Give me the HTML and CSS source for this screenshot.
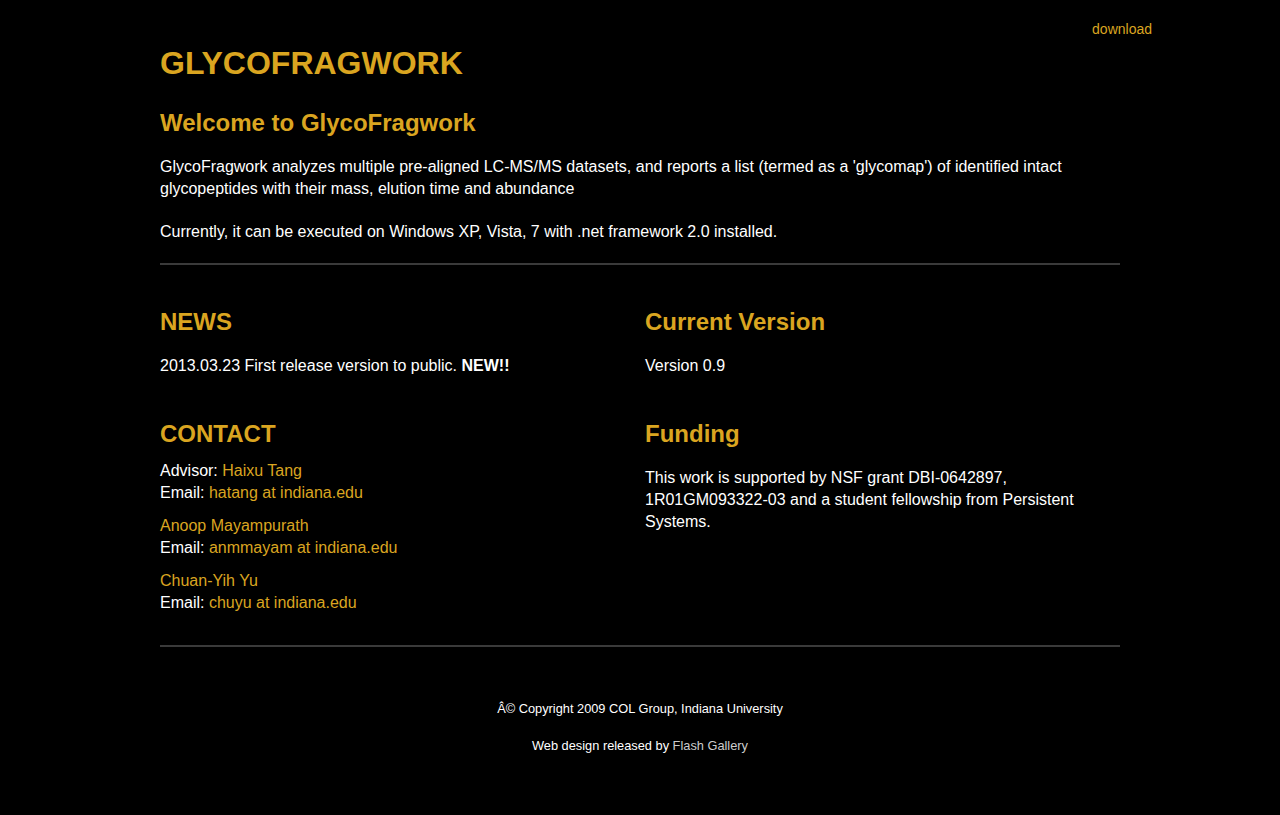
FILE: index.html
```html
<!DOCTYPE html>
<html>
<head>
<meta charset="utf-8">
<title>GlycoFragwork</title>
<link rel="stylesheet" href="styles.css">
</head>
<body>
<div class="topbar"><a class="link" href="#">download</a></div>
<div class="page">
  <h1 class="title">GLYCOFRAGWORK</h1>
  <h2 class="heading welcome">Welcome to GlycoFragwork</h2>
  <p class="text">GlycoFragwork analyzes multiple pre-aligned LC-MS/MS datasets, and reports a list (termed as a 'glycomap') of identified intact glycopeptides with their mass, elution time and abundance</p>
  <p class="text">Currently, it can be executed on Windows XP, Vista, 7 with .net framework 2.0 installed.</p>
  <div class="rule"></div>
  <div class="grid">
    <section class="col">
      <h2 class="heading">NEWS</h2>
      <p class="text">2013.03.23 First release version to public. <b>NEW!!</b></p>
    </section>
    <section class="col">
      <h2 class="heading">Current Version</h2>
      <p class="text">Version 0.9</p>
    </section>
    <section class="col">
      <h2 class="heading contact-h">CONTACT</h2>
      <p class="text contact">Advisor: <a class="link" href="#">Haixu Tang</a><br>Email: <a class="link" href="#">hatang at indiana.edu</a></p>
      <p class="text contact"><a class="link" href="#">Anoop Mayampurath</a><br>Email: <a class="link" href="#">anmmayam at indiana.edu</a></p>
      <p class="text contact"><a class="link" href="#">Chuan-Yih Yu</a><br>Email: <a class="link" href="#">chuyu at indiana.edu</a></p>
    </section>
    <section class="col">
      <h2 class="heading">Funding</h2>
      <p class="text">This work is supported by NSF grant DBI-0642897, 1R01GM093322-03 and a student fellowship from Persistent Systems.</p>
    </section>
  </div>
  <div class="rule"></div>
  <footer class="footer">
    <p>Â© Copyright 2009 COL Group, Indiana University</p>
    <p>Web design released by <a class="flink" href="#">Flash Gallery</a></p>
  </footer>
</div>
</body>
</html>
```
FILE: styles.css
```css
html, body {
  margin: 0;
  padding: 0;
  background: #000;
  color: #fff;
  font-family: "Liberation Sans", Arial, sans-serif;
}
.link {
  color: #daa520;
  text-decoration: none;
}
.topbar {
  width: 1024px;
  margin: 0 auto;
  display: flex;
  justify-content: flex-end;
  padding-top: 21px;
  font-size: 14px;
  line-height: 17px;
}
.page {
  width: 960px;
  margin: 0 auto;
}
.title {
  margin: 5px 0 0;
  font-size: 32px;
  line-height: 40px;
  color: #daa520;
  font-weight: bold;
}
.heading {
  margin: 0;
  font-size: 24px;
  line-height: 30px;
  color: #daa520;
  font-weight: bold;
}
.welcome {
  margin-top: 25px;
}
.text {
  font-size: 16px;
  line-height: 22px;
  margin: 0;
}
.welcome + .text {
  margin-top: 18px;
}
.text + .text {
  margin-top: 21px;
}
.rule {
  height: 2px;
  background: #3a3a3a;
  margin-top: 20px;
}
.grid {
  display: grid;
  grid-template-columns: 485px 475px;
  padding-top: 42px;
  padding-bottom: 11px;
  row-gap: 42px;
}
.col .heading + .text {
  margin-top: 18px;
}
.col .contact-h + .text {
  margin-top: 11px;
}
.col .contact + .contact {
  margin-top: 11px;
}
.footer {
  text-align: center;
  font-size: 12.8px;
  line-height: 16px;
  padding-top: 54px;
}
.footer p {
  margin: 0 0 21px;
}
.flink {
  color: #ccc;
  text-decoration: none;
}
```
